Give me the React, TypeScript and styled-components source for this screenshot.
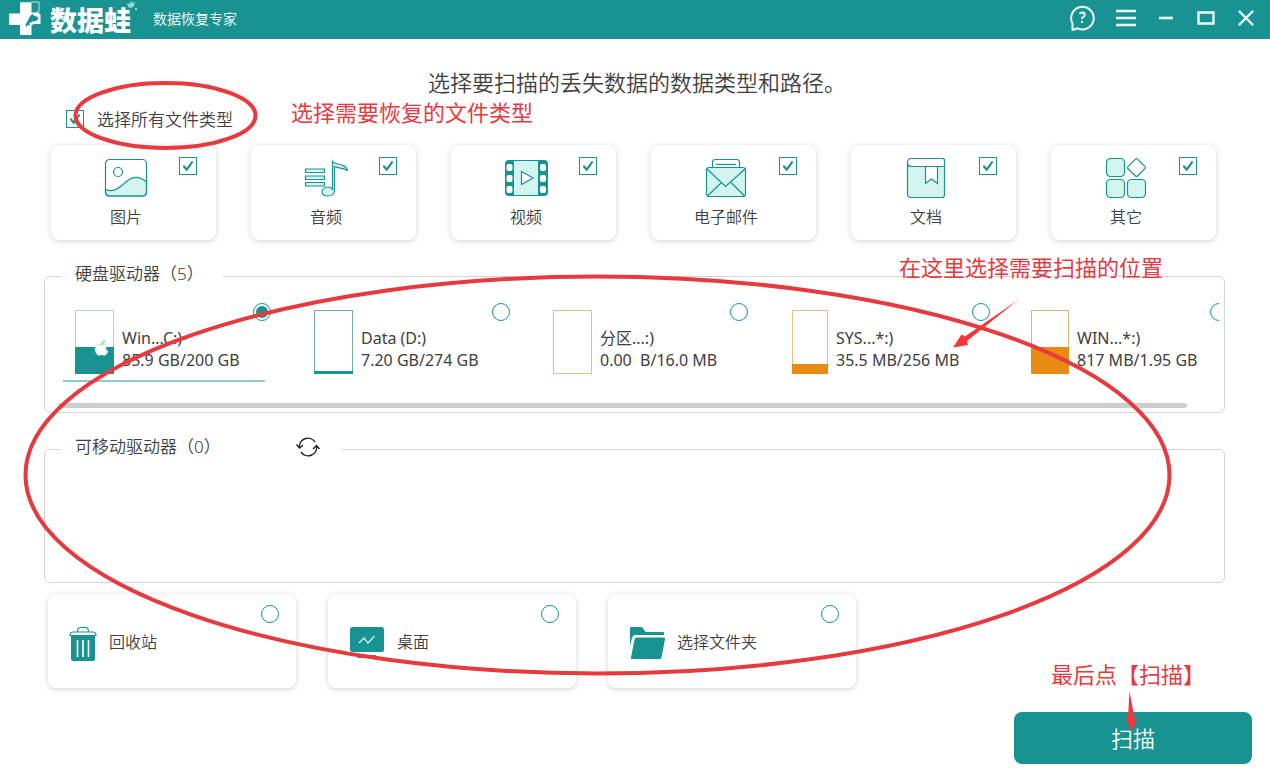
import React, { useState } from 'react';
import styled, { createGlobalStyle, css } from 'styled-components';

const teal = '#189392';
const mint = '#d3f5ef';
const orange = '#e98a13';
const red = '#e63a3f';

const GlobalStyle = createGlobalStyle`
  *, *::before, *::after { box-sizing: border-box; }
  body {
    margin: 0;
    background: #fefefe;
    color: #404040;
    font-family: "Noto Sans", "Noto Sans CJK SC", sans-serif;
    font-size: 16px;
    line-height: 22px;
  }
`;

const Page = styled.div`
  position: relative;
  display: flex;
  flex-direction: column;
  min-height: 100vh;
`;

const TitleBar = styled.header`
  display: flex;
  align-items: center;
  height: 39px;
  padding: 0 11px 0 8px;
  background: ${teal};
  color: #fff;
`;

const LogoText = styled.strong`
  margin: 0 22px 0 8px;
  font-family: "Noto Sans CJK SC", sans-serif;
  font-size: 27px;
  font-weight: 900;
  line-height: 39px;
`;

const cjkText = css`
  font-family: "Noto Sans CJK SC", "Noto Sans", sans-serif;
  font-weight: 350;
`;

const Product = styled.span`
  ${cjkText}
  padding-bottom: 4px;
  font-size: 14px;
`;

const WindowButtons = styled.nav`
  display: flex;
  align-items: center;
  gap: 14px;
  margin-left: auto;
  padding-bottom: 4px;
`;

const WindowButton = styled.button`
  display: grid;
  place-items: center;
  width: 26px;
  height: 30px;
  padding: 0;
  border: 0;
  background: none;
  color: #e9fffd;
`;

const HelpButton = styled(WindowButton)`
  margin-right: 4px;
`;

const Main = styled.main`
  display: flex;
  flex-direction: column;
  padding: 27px 18px 13px 44px;
`;

const Heading = styled.h1`
  ${cjkText}
  margin: 0 27px 0 0;
  padding-left: 5px;
  font-size: 22px;
  line-height: 30px;
  text-align: center;
`;

const AllTypes = styled.label`
  ${cjkText}
  display: flex;
  align-items: center;
  align-self: flex-start;
  gap: 13px;
  margin: 11px 0 14px 22px;
  font-size: 17px;
  line-height: 24px;
`;

const CheckBox = styled.input.attrs({ type: 'checkbox' })`
  appearance: none;
  display: grid;
  place-items: center;
  flex: none;
  width: 18px;
  height: 18px;
  margin: 0;
  border: 1px solid ${teal};
  background: #fff;

  &:checked::after {
    content: '';
    width: 11px;
    height: 10px;
    background: ${teal};
    clip-path: polygon(0 52%, 14% 40%, 38% 68%, 84% 0, 100% 10%, 42% 100%, 34% 100%);
  }
`;

const RadioDot = styled.input.attrs({ type: 'radio' })`
  appearance: none;
  display: grid;
  place-items: center;
  align-self: flex-start;
  flex: none;
  width: 18px;
  height: 18px;
  margin: 0;
  border: 1px solid ${teal};
  border-radius: 50%;
  background: #fff;

  &:checked::after {
    content: '';
    width: 12px;
    height: 12px;
    border-radius: 50%;
    background: ${teal};
  }
`;

const cardLook = css`
  border-radius: 8px;
  background: #fff;
  box-shadow: 0 1px 5px rgba(0, 0, 0, 0.17);
`;

const TypeGrid = styled.div`
  display: grid;
  grid-template-columns: repeat(6, 1fr);
  gap: 35px;
  margin: 0 36px 0 7px;
`;

const TypeCard = styled.label`
  ${cardLook}
  display: grid;
  grid-template-columns: 18px 1fr 18px;
  padding: 12px 19px 13px 4px;
`;

const TypeFace = styled.span`
  ${cjkText}
  display: flex;
  flex-direction: column;
  align-items: center;
  grid-column: 2;
  gap: 6px;
`;

const Group = styled.fieldset`
  min-width: 0;
  margin: 24px 27px 0 0;
  padding: 0;
  border: 1px solid #d4d4d4;
  border-radius: 6px;
`;

const Legend = styled.legend<{ $wide?: boolean }>`
  display: flex;
  align-items: center;
  justify-content: space-between;
  width: ${(p) => (p.$wide ? 281 : 162)}px;
  height: 24px;
  margin-left: 16px;
  padding: 0 22px 4px 14px;
  font-size: 17px;
  font-weight: 350;
`;

const RefreshButton = styled.button`
  display: flex;
  padding: 0;
  border: 0;
  background: none;
  color: #222;
`;

const DriveList = styled.div`
  display: flex;
  gap: 37px;
  margin: 0 5px 0 18px;
  padding-top: 15px;
  overflow: hidden;
`;

const Drive = styled.label<{ $active: boolean }>`
  display: flex;
  flex: none;
  width: 202px;
  height: 79px;
  padding-left: 12px;
  border-bottom: 2px solid ${(p) => (p.$active ? '#93c9c8' : 'transparent')};
`;

const Jar = styled.span<{ $edge: string; $width: number }>`
  display: flex;
  flex-direction: column;
  justify-content: flex-end;
  flex: none;
  position: relative;
  width: ${(p) => p.$width}px;
  height: 64px;
  margin-top: 7px;
  border: 1px solid ${(p) => p.$edge};
`;

const JarFill = styled.span<{ $color: string }>`
  display: block;
  margin: 0 -1px -1px;
  background: ${(p) => p.$color};
`;

const JarBadge = styled.svg`
  position: absolute;
  right: 4px;
  bottom: 17px;
`;

const DriveText = styled.span`
  display: flex;
  flex-direction: column;
  margin: 24px 13px 0 8px;
  font-weight: 400;
  white-space: pre;
`;

const ScrollTrack = styled.div`
  margin: 21px 37px 4px 13px;
`;

const ScrollThumb = styled.div`
  height: 5px;
  border-radius: 3px;
  background: #cdcdcd;
`;

const EmptyDrives = styled.div`
  height: 121px;
`;

const PlaceRow = styled.div`
  display: flex;
  gap: 32px;
  margin: 11px 0 0 4px;
`;

const PlaceCard = styled.label`
  ${cardLook}
  display: flex;
  align-items: center;
  flex: 0 1 248px;
  gap: 12px;
  height: 94px;
  padding: 11px 17px 5px 21px;

  ${RadioDot} { margin-left: auto; }
`;

const PlaceName = styled.span`
  ${cjkText}
  padding-bottom: 6px;
`;

const ScanButton = styled.button`
  ${cjkText}
  align-self: flex-end;
  width: 238px;
  height: 52px;
  margin-top: 24px;
  padding: 0 0 2px;
  border: 0;
  border-radius: 8px;
  background: ${teal};
  color: #fff;
  font-size: 22px;
`;

const Markup = styled.div`
  position: absolute;
  inset: 0;
  pointer-events: none;
`;

const MarkupDrawing = styled.svg`
  display: block;
  width: 100%;
  height: 100%;
`;

const Note = styled.span<{ $left: number; $top: number }>`
  position: absolute;
  left: ${(p) => p.$left}px;
  top: ${(p) => p.$top}px;
  color: ${red};
  font-size: 22px;
  line-height: 30px;
  white-space: nowrap;
`;

const LogoMark = () => (
  <svg width="34" height="37" viewBox="0 0 34 37" aria-hidden="true">
    <path d="M12 2h11.500v9.500H30l2.500 2V23h-7l-2 1.500V34H12V24H1V12.500h11z" fill="#fff" />
    <path d="M22 15l2.500-2 2 2 2.500.5 1.500 2.500-2.500 2-3.500.5-3.500 2 1.500 2-3-.5-1 2.500-1-3 2.500-4z" fill={teal} />
    <path d="M12 1.500h10l1-.5h8v10h-2.500" fill="none" stroke="#bfe6e3" strokeWidth="1" />
  </svg>
);

const LeafMark = styled.svg`
  position: absolute;
  left: 126px;
  top: 0;
`;

const iconProps = {
  fill: 'none',
  stroke: teal,
  strokeWidth: 1.2,
  width: 44,
  height: 42,
  viewBox: '0 0 44 42',
  'aria-hidden': true,
} as const;

const PictureIcon = () => (
  <svg {...iconProps}>
    <path d="M1.500 32.500c9 4 15-3 21-8 7-6 14-5 20 .500V35q0 4-4 4h-33q-4 0-4-4z" fill={mint} />
    <rect x="1.500" y="2.500" width="41" height="36.500" rx="4" />
    <circle cx="14" cy="15" r="4.500" />
  </svg>
);

const MusicIcon = () => (
  <svg {...iconProps}>
    <path d="M1.500 12h19v3.500h-19zM1.500 19h19v3.500h-19zM1.500 25.500h19v3.500h-19z" fill={mint} />
    <path
      d="M28.500 33V4.500c2 3.500 13.500 1.500 15 9-4-2.500-9-2.500-13-4v24.500c0 3-3 5-6.500 5-3.500 0-6-1.700-6-4.300s3-4.700 6-4.700c2 0 4 1 4.500 3z"
      fill={mint}
    />
  </svg>
);

const VideoIcon = () => (
  <svg {...iconProps}>
    <rect x="1" y="3" width="43" height="36" rx="4" fill={teal} stroke="none" />
    <path d="M10 4h24v34H10z" fill={mint} stroke="none" />
    <g fill="#fff" stroke="none">
      <rect x="2.500" y="7" width="6" height="7" rx="2" />
      <rect x="2.500" y="18" width="6" height="7" rx="2" />
      <rect x="2.500" y="29" width="6" height="7" rx="2" />
      <rect x="36" y="7" width="6" height="7" rx="2" />
      <rect x="36" y="18" width="6" height="7" rx="2" />
      <rect x="36" y="29" width="6" height="7" rx="2" />
    </g>
    <path d="M17.500 14.500v13l11.500-6.500z" fill="#fff" />
  </svg>
);

const MailIcon = () => (
  <svg {...iconProps}>
    <path d="M8.500 11V5.500q0-3 3-3h21q3 0 3 3V11" fill="#fff" />
    <path d="M12 7.500h20" />
    <rect x="2.500" y="10.500" width="39" height="29" rx="2.500" fill={mint} />
    <path d="M3 12l18.500 17.500L41 12M3.500 39l13.500-13M40.500 39L27 25.500" />
  </svg>
);

const DocumentIcon = () => (
  <svg {...iconProps}>
    <path d="M3.500 5.500V37q0 3.500 3.500 3.500h31q2.500 0 2.500-2.500V9.500H7q-3.500 0-3.500-4z" fill={mint} />
    <path d="M40 1.500H8q-4.500 0-4.500 4t4.500 4h32.500v-6q0-2-2-2" fill="#fff" />
    <path d="M21.500 9.500v17l6-4.500 6 4.500v-17z" fill="#fff" />
  </svg>
);

const OtherIcon = () => (
  <svg {...iconProps}>
    <g fill={mint}>
      <rect x="2.500" y="1.500" width="18" height="18" rx="4" />
      <rect x="2.500" y="22.500" width="18" height="18" rx="4" />
      <rect x="23.500" y="22.500" width="18" height="18" rx="4" />
    </g>
    <path d="M31.500 2.200q1-1 2 0l7.500 7.500q1 1 0 2L33.500 19q-1 1-2 0L24 11.700q-1-1 0-2z" fill="#fff" />
  </svg>
);

const TrashIcon = () => (
  <svg width="28" height="36" viewBox="0 0 28 36" aria-hidden="true">
    <path d="M1 9.500Q1 6 4.500 6h19Q27 6 27 9.500zM8.500 6q0-4.500 3-4.500h5q3 0 3 4.500" fill="#fff" stroke={teal} strokeWidth="1.200" />
    <path d="M2 10h24v23q0 2-2 2H4q-2 0-2-2z" fill={teal} />
    <path d="M8.500 14v17M14 14v17M19.500 14v17" stroke="#fff" strokeWidth="1.600" />
  </svg>
);

const DesktopIcon = () => (
  <svg width="36" height="36" viewBox="0 0 36 36" aria-hidden="true">
    <rect x="1" y="1" width="34" height="25" rx="2.500" fill={teal} />
    <path d="M10 29h17v3H8z" fill={teal} />
    <path d="M10 17l5-5 4 5 6.500-7" fill="none" stroke="#d8f6f4" strokeWidth="1.200" />
  </svg>
);

const FolderIcon = () => (
  <svg width="36" height="36" viewBox="0 0 36 36" aria-hidden="true">
    <path d="M1 2q0-1 1-1h10q1.500 0 2.500 2l2 3H34q1 0 1 1v2H6q-2 0-3 3L1 20z" fill={teal} />
    <path d="M8 11.500h27q1.500 0 1 1.500l-3.500 18.500q-.5 1.500-2 1.500H3q-1.500 0-1-1.500l3.500-18q.5-2 2.500-2z" fill={teal} />
  </svg>
);

const RefreshIcon = () => (
  <svg width="24" height="22" viewBox="0 0 24 22" fill="none" stroke="currentColor" strokeWidth="1.400" aria-hidden="true">
    <path d="M3.500 12A8.500 8.500 0 0 1 19 6M20.500 10A8.500 8.500 0 0 1 5 16M.5 8.500l3 3.500 3.500-3M17 13l3.500-3.500 3 3.500" />
  </svg>
);

const AppleBadge = () => (
  <JarBadge width="15" height="16" viewBox="0 0 15 16" aria-hidden="true">
    <path
      d="M7.500 5C9 4 12 3.500 13.500 5.800c-2.200 1.400-1.800 4.500.7 5.500-.7 2-2 4.200-3.700 4.200-1 0-1.500-.6-2.700-.6s-1.800.6-2.700.6C3 15.500 1 12 1 9.200 1 6 3 4.300 5 4.300c1 0 1.800.7 2.500.7z"
      fill="#fff"
      stroke="#8cc9c7"
      strokeWidth=".5"
    />
    <path d="M7.500 4.300C7.400 2 8.500.8 10.400.5c.1 2-1 3.500-2.900 3.800z" fill="#fff" stroke={teal} strokeWidth=".5" />
  </JarBadge>
);

const fileTypes = [
  { name: '图片', Icon: PictureIcon },
  { name: '音频', Icon: MusicIcon },
  { name: '视频', Icon: VideoIcon },
  { name: '电子邮件', Icon: MailIcon },
  { name: '文档', Icon: DocumentIcon },
  { name: '其它', Icon: OtherIcon },
];

const drives = [
  { id: 'c', name: 'Win...C:)', usage: '85.9 GB/200 GB', fill: 27, width: 39, color: teal, edge: '#b5d3d2', badge: true },
  { id: 'd', name: 'Data (D:)', usage: '7.20 GB/274 GB', fill: 3, width: 39, color: teal, edge: '#6fb0ae' },
  { id: 'p', name: '分区...:)', usage: '0.00  B/16.0 MB', fill: 0, width: 39, color: orange, edge: '#e9bd7f' },
  { id: 's', name: 'SYS...*:)', usage: '35.5 MB/256 MB', fill: 10, width: 36, color: orange, edge: '#e9bd7f' },
  { id: 'w', name: 'WIN...*:)', usage: '817 MB/1.95 GB', fill: 27, width: 38, color: orange, edge: '#dfb277' },
];

const places = [
  { id: 'bin', name: '回收站', Icon: TrashIcon },
  { id: 'desktop', name: '桌面', Icon: DesktopIcon },
  { id: 'folder', name: '选择文件夹', Icon: FolderIcon },
];

export default function App() {
  const [checked, setChecked] = useState<string[]>(fileTypes.map((t) => t.name));
  const [target, setTarget] = useState('c');
  const allChecked = checked.length === fileTypes.length;

  const toggle = (name: string) =>
    setChecked((now) => (now.includes(name) ? now.filter((n) => n !== name) : [...now, name]));

  return (
    <Page>
      <GlobalStyle />
      <TitleBar>
        <LogoMark />
        <LogoText>数据蛙</LogoText>
        <LeafMark width="12" height="12" viewBox="0 0 12 12" aria-hidden="true">
          <path d="M1 3l3 1 1-3 2 2 2-1-1 4-3 2-3-1zM9 8h2v2H9z" fill="#8fdcd2" />
        </LeafMark>
        <Product>数据恢复专家</Product>
        <WindowButtons>
          <HelpButton aria-label="帮助">
            <svg width="26" height="28" viewBox="0 0 26 28" fill="none" stroke="currentColor" strokeWidth="2">
              <path d="M3.500 26V19.500A11.300 11.300 0 1 1 8.500 24.300z" strokeLinejoin="round" />
              <path d="M10.500 9.800q.8-1.300 2.700-1.300 2.500 0 2.500 2.200 0 1.400-1.400 2.200-1.300.8-1.300 2.200M13 16.700v2.200" />
            </svg>
          </HelpButton>
          <WindowButton aria-label="菜单">
            <svg width="20" height="18" viewBox="0 0 20 18" stroke="currentColor" strokeWidth="2.600">
              <path d="M0 2h20M0 9h20M0 16h20" />
            </svg>
          </WindowButton>
          <WindowButton aria-label="最小化">
            <svg width="14" height="4" viewBox="0 0 14 4" stroke="currentColor" strokeWidth="2.600">
              <path d="M0 2h14" />
            </svg>
          </WindowButton>
          <WindowButton aria-label="最大化">
            <svg width="18" height="14" viewBox="0 0 18 14" fill="none" stroke="currentColor" strokeWidth="2.400">
              <path d="M1.500 1.500h15v11h-15z" />
            </svg>
          </WindowButton>
          <WindowButton aria-label="关闭">
            <svg width="16" height="16" viewBox="0 0 16 16" stroke="currentColor" strokeWidth="2.400" strokeLinecap="round">
              <path d="M1.500 1.500l13 13M14.500 1.500l-13 13" />
            </svg>
          </WindowButton>
        </WindowButtons>
      </TitleBar>

      <Main>
        <Heading>选择要扫描的丢失数据的数据类型和路径。</Heading>
        <AllTypes>
          <CheckBox
            checked={allChecked}
            onChange={() => setChecked(allChecked ? [] : fileTypes.map((t) => t.name))}
          />
          选择所有文件类型
        </AllTypes>

        <TypeGrid>
          {fileTypes.map(({ name, Icon }) => (
            <TypeCard key={name}>
              <TypeFace>
                <Icon />
                {name}
              </TypeFace>
              <CheckBox checked={checked.includes(name)} onChange={() => toggle(name)} />
            </TypeCard>
          ))}
        </TypeGrid>

        <Group>
          <Legend>硬盘驱动器（5）</Legend>
          <DriveList>
            {drives.map((d) => (
              <Drive key={d.id} $active={target === d.id}>
                <Jar $edge={d.edge} $width={d.width}>
                  <JarFill $color={d.color} style={{ height: d.fill }} />
                  {d.badge && <AppleBadge />}
                </Jar>
                <DriveText>
                  <span>{d.name}</span>
                  <span>{d.usage}</span>
                </DriveText>
                <RadioDot name="target" checked={target === d.id} onChange={() => setTarget(d.id)} />
              </Drive>
            ))}
          </DriveList>
          <ScrollTrack>
            <ScrollThumb />
          </ScrollTrack>
        </Group>

        <Group>
          <Legend $wide>
            可移动驱动器（0）
            <RefreshButton aria-label="刷新">
              <RefreshIcon />
            </RefreshButton>
          </Legend>
          <EmptyDrives />
        </Group>

        <PlaceRow>
          {places.map(({ id, name, Icon }) => (
            <PlaceCard key={id}>
              <Icon />
              <PlaceName>{name}</PlaceName>
              <RadioDot name="target" checked={target === id} onChange={() => setTarget(id)} />
            </PlaceCard>
          ))}
        </PlaceRow>

        <ScanButton>扫描</ScanButton>
      </Main>

      <Markup>
        <MarkupDrawing viewBox="0 0 1270 777" preserveAspectRatio="none" aria-hidden="true">
          <g fill="none" stroke={red} strokeWidth="4">
            <ellipse cx="165.500" cy="115.500" rx="90" ry="32.500" />
            <ellipse cx="597.500" cy="475" rx="572" ry="198.500" />
          </g>
          <g fill="#f5373b">
            <path d="M1020 298.500L967 341l1 4-15 2.500 8.500-13 3.500 2z" />
            <path d="M1129.500 691l5 27 2.500 1-5 12-6.500-13 2.500-.5z" />
          </g>
        </MarkupDrawing>
        <Note $left={291} $top={97}>选择需要恢复的文件类型</Note>
        <Note $left={899} $top={252}>在这里选择需要扫描的位置</Note>
        <Note $left={1051} $top={659}>最后点【扫描】</Note>
      </Markup>
    </Page>
  );
}
